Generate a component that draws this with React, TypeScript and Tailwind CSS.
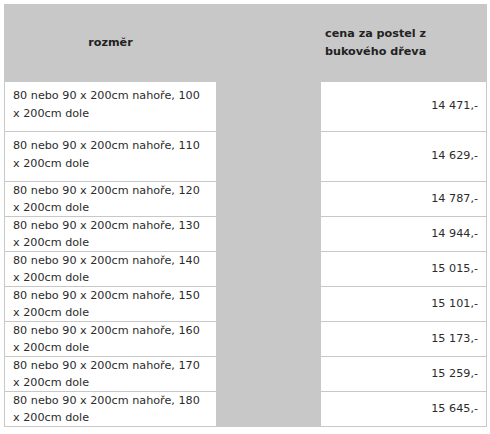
import React from "react";

// rows of the price table
const rows = [
  { size: "100", price: "14 471,-", tall: true },
  { size: "110", price: "14 629,-", tall: true },
  { size: "120", price: "14 787,-" },
  { size: "130", price: "14 944,-" },
  { size: "140", price: "15 015,-" },
  { size: "150", price: "15 101,-" },
  { size: "160", price: "15 173,-" },
  { size: "170", price: "15 259,-" },
  { size: "180", price: "15 645,-" },
];

export default function App() {
  return (
    <div
      className="min-h-screen bg-white pt-[4px] pl-[4px] text-[11.2px] text-[#2b2b2b]"
      style={{ fontFamily: '"DejaVu Sans", Verdana, sans-serif' }}
    >
      <div className="w-[483px] bg-[#c8c8c8] p-px flex flex-col gap-px">
        {/* Header */}
        <div className="grid grid-cols-[211px_105px_165px] h-[76px] font-bold text-[#222]">
          <div className="flex items-center justify-center">rozměr</div>
          <div />
          <div className="flex items-center pl-[4px] leading-[18px]">
            <span>
              cena za postel z<br />
              bukového dřeva
            </span>
          </div>
        </div>

        {/* Body rows */}
        {rows.map((r) => (
          <div
            key={r.size}
            className={
              r.tall
                ? "grid grid-cols-[211px_105px_165px] h-[49px]"
                : "grid grid-cols-[211px_105px_165px] h-[34px]"
            }
          >
            <div
              className={
                r.tall
                  ? "bg-white pl-2 pt-[5px] leading-[18px]"
                  : "bg-white pl-2 flex items-center leading-[17px]"
              }
            >
              <span>
                80 nebo 90 x 200cm nahoře, {r.size}
                <br />x 200cm dole
              </span>
            </div>
            <div />
            <div className="bg-white flex items-center justify-end pr-2">
              {r.price}
            </div>
          </div>
        ))}
      </div>
    </div>
  );
}
